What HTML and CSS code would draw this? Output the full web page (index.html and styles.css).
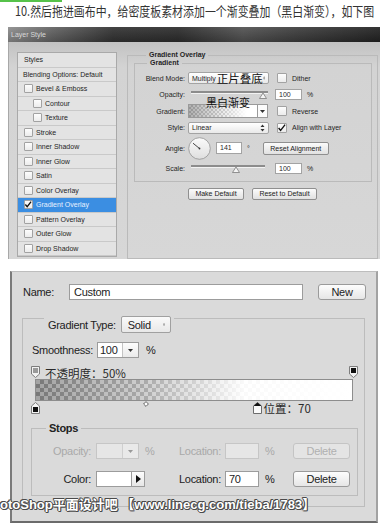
FILE: index.html
```html
<!DOCTYPE html>
<html lang="zh-CN">
<head>
    <meta charset="UTF-8">
    <meta name="viewport" content="width=device-width, initial-scale=1.0">
    <title>渐变叠加</title>
    <link rel="stylesheet" href="styles.css">
</head>
<body>
    <div class="accent"></div>
    <p class="caption"><span>10.然后拖进画布中，给密度板素材添加一个渐变叠加（黑白渐变），如下图</span></p>

    <!-- Layer Style dialog -->
    <section class="layer-style">
        <div class="ls-title">Layer Style</div>
        <div class="ls-body">
            <ul class="ls-list">
                <li class="ls-plain">Styles</li>
                <li class="ls-plain ls-blend">Blending Options: Default</li>
                <li><i class="cb"></i>Bevel &amp; Emboss</li>
                <li class="ls-sub"><i class="cb"></i>Contour</li>
                <li class="ls-sub"><i class="cb"></i>Texture</li>
                <li><i class="cb"></i>Stroke</li>
                <li><i class="cb"></i>Inner Shadow</li>
                <li><i class="cb"></i>Inner Glow</li>
                <li><i class="cb"></i>Satin</li>
                <li><i class="cb"></i>Color Overlay</li>
                <li class="ls-on"><i class="cb"><svg width="9" height="9" viewBox="0 0 9 9"><path d="M1.5 4.5 L3.6 7 L8 1.2" fill="none" stroke="#111" stroke-width="1.5"/></svg></i>Gradient Overlay</li>
                <li><i class="cb"></i>Pattern Overlay</li>
                <li><i class="cb"></i>Outer Glow</li>
                <li><i class="cb"></i>Drop Shadow</li>
            </ul>
            <fieldset class="ls-group">
                <legend>Gradient Overlay</legend>
                <fieldset class="ls-inner">
                    <legend>Gradient</legend>
                    <div class="ls-rows">
                        <div class="ls-row">
                            <span class="ls-lbl">Blend Mode:</span>
                            <div class="ls-select">
                                <span>Multiply</span><span class="ls-cn">正片叠底</span>
                                <svg width="5" height="8" viewBox="0 0 5 8"><path d="M2.5 0.5 L4.5 3 H0.5 Z M2.5 7.5 L4.5 5 H0.5 Z" fill="#333"/></svg>
                            </div>
                            <label class="ls-check"><i class="cb"></i>Dither</label>
                        </div>
                        <div class="ls-row">
                            <span class="ls-lbl">Opacity:</span>
                            <svg class="ls-slider" width="81" height="14" viewBox="0 0 81 14">
                                <line x1="3" y1="4" x2="80" y2="4" stroke="#8c8c8c" stroke-width="2"/>
                                <line x1="3" y1="5.5" x2="80" y2="5.5" stroke="#f2f2f2" stroke-width="1"/>
                                <path d="M75 5 L78.5 10.5 H71.5 Z" fill="#f4f4f4" stroke="#7a7a7a" stroke-width="0.8"/>
                            </svg>
                            <span class="ls-num">100</span><span class="ls-unit">%</span>
                        </div>
                        <div class="ls-row">
                            <span class="ls-lbl">Gradient:</span>
                            <div class="ls-grad"><span class="ls-note">黑白渐变</span></div>
                            <span class="ls-drop"><svg width="5" height="3" viewBox="0 0 5 3"><path d="M0 0 H5 L2.5 3 Z" fill="#333"/></svg></span>
                            <label class="ls-check ls-check-wide"><i class="cb"></i>Reverse</label>
                        </div>
                        <div class="ls-row">
                            <span class="ls-lbl">Style:</span>
                            <div class="ls-select">
                                <span>Linear</span>
                                <svg width="5" height="8" viewBox="0 0 5 8"><path d="M2.5 0.5 L4.5 3 H0.5 Z M2.5 7.5 L4.5 5 H0.5 Z" fill="#333"/></svg>
                            </div>
                            <label class="ls-check"><i class="cb"><svg width="10" height="10" viewBox="0 0 10 10"><path d="M1.8 5 L4 7.8 L9 1.2" fill="none" stroke="#111" stroke-width="1.5"/></svg></i>Align with Layer</label>
                        </div>
                        <div class="ls-row ls-row-tall">
                            <span class="ls-lbl">Angle:</span>
                            <svg class="ls-dial" width="23" height="23" viewBox="0 0 23 23">
                                <defs><linearGradient id="dialFill" x1="0" y1="0" x2="0" y2="1"><stop offset="0" stop-color="#fbfbfb"/><stop offset="1" stop-color="#dedede"/></linearGradient></defs>
                                <circle cx="11.5" cy="11.5" r="10.8" fill="url(#dialFill)" stroke="#9a9a9a" stroke-width="0.9"/>
                                <line x1="11.5" y1="11.5" x2="5" y2="6.2" stroke="#333" stroke-width="0.9"/>
                                <circle cx="11.5" cy="11.5" r="0.9" fill="#333"/>
                            </svg>
                            <span class="ls-num ls-num-angle">141</span><span class="ls-unit">°</span>
                            <span class="ls-btn ls-btn-align">Reset Alignment</span>
                        </div>
                        <div class="ls-row">
                            <span class="ls-lbl">Scale:</span>
                            <svg class="ls-slider" width="81" height="14" viewBox="0 0 81 14">
                                <line x1="3" y1="4" x2="77" y2="4" stroke="#8c8c8c" stroke-width="2"/>
                                <line x1="3" y1="5.5" x2="77" y2="5.5" stroke="#f2f2f2" stroke-width="1"/>
                                <path d="M48 5 L51.5 10.5 H44.5 Z" fill="#f4f4f4" stroke="#7a7a7a" stroke-width="0.8"/>
                            </svg>
                            <span class="ls-num">100</span><span class="ls-unit">%</span>
                        </div>
                    </div>
                </fieldset>
                <div class="ls-actions">
                    <span class="ls-btn ls-btn-default">Make Default</span>
                    <span class="ls-btn ls-btn-reset">Reset to Default</span>
                </div>
            </fieldset>
        </div>
    </section>

    <!-- Gradient Editor -->
    <section class="gradient-editor">
        <div class="ge-name">
            <span class="ge-name-label">Name:</span>
            <span class="ge-field">Custom</span>
            <span class="ge-btn ge-btn-new">New</span>
        </div>

        <div class="ge-type">
            <div class="ge-type-head">
                <span>Gradient Type:</span>
                <span class="ge-select">Solid
                    <svg width="6" height="9" viewBox="0 0 6 9"><path d="M3 0.5 L5.5 3.5 H0.5 Z M3 8.5 L5.5 5.5 H0.5 Z" fill="#444"/></svg>
                </span>
            </div>

            <div class="ge-smooth">
                <span class="ge-smooth-label">Smoothness:</span>
                <span class="ge-combo">
                    <span class="ge-combo-val">100</span>
                    <span class="ge-combo-btn"><svg width="5" height="3" viewBox="0 0 5 3"><path d="M0 0 H5 L2.5 3 Z" fill="#333"/></svg></span>
                </span>
                <span class="ge-unit">%</span>
            </div>

            <div class="ge-ramp">
                <div class="ge-stops ge-stops-top">
                    <svg class="ge-stop" style="left: calc(0% - 4.5px)" width="9" height="12" viewBox="0 0 9 12"><path d="M0.5 0.5 H8.5 V8 L4.5 11.5 L0.5 8 Z" fill="#f2f2f2" stroke="#7d7d7d"/><rect x="2" y="2" width="5" height="5" fill="#9a9a9a"/></svg>
                    <span class="ge-note ge-note-opacity">不透明度：50%</span>
                    <svg class="ge-stop" style="left: calc(100% - 4.5px)" width="9" height="12" viewBox="0 0 9 12"><path d="M0.5 0.5 H8.5 V8 L4.5 11.5 L0.5 8 Z" fill="#f2f2f2" stroke="#7d7d7d"/><rect x="2" y="2" width="5" height="5" fill="#111"/></svg>
                </div>
                <div class="ge-bar"></div>
                <div class="ge-stops ge-stops-bottom">
                    <svg class="ge-stop" style="left: calc(0% - 4.5px)" width="9" height="12" viewBox="0 0 9 12"><path d="M4.5 0.5 L8.5 4 V11.5 H0.5 V4 Z" fill="#f2f2f2" stroke="#7d7d7d"/><rect x="2" y="5" width="5" height="5" fill="#111"/></svg>
                    <svg class="ge-mid" style="left: calc(35% - 3px)" width="6" height="6" viewBox="0 0 6 6"><path d="M3 0.6 L5.4 3 L3 5.4 L0.6 3 Z" fill="#fff" stroke="#555" stroke-width="0.9"/></svg>
                    <svg class="ge-stop" style="left: calc(70% - 4.5px)" width="9" height="12" viewBox="0 0 9 12"><path d="M4.5 0.5 L8.5 4 V11.5 H0.5 V4 Z" fill="#fafafa" stroke="#6d6d6d"/><path d="M4.5 0.5 L8.5 4 H0.5 Z" fill="#111"/></svg>
                    <span class="ge-note ge-note-location" style="left: calc(70% + 6px)">位置：70</span>
                </div>
            </div>

            <fieldset class="ge-stops-box">
                <legend>Stops</legend>
                <div class="ge-row ge-row-off">
                    <span class="ge-row-label">Opacity:</span>
                    <span class="ge-cell">
                        <span class="ge-combo ge-combo-small">
                            <span class="ge-combo-val"></span>
                            <span class="ge-combo-btn"><svg width="5" height="3" viewBox="0 0 5 3"><path d="M0 0 H5 L2.5 3 Z" fill="#999"/></svg></span>
                        </span>
                        <span class="ge-unit">%</span>
                    </span>
                    <span class="ge-cell ge-cell-loc">
                        <span class="ge-loc-label">Location:</span>
                        <span class="ge-loc"></span>
                        <span class="ge-unit">%</span>
                    </span>
                    <span class="ge-btn ge-btn-delete">Delete</span>
                </div>
                <div class="ge-row">
                    <span class="ge-row-label">Color:</span>
                    <span class="ge-cell">
                        <span class="ge-swatch"></span>
                        <span class="ge-swatch-btn"><svg width="5" height="8" viewBox="0 0 5 8"><path d="M0 0 L5 4 L0 8 Z" fill="#111"/></svg></span>
                    </span>
                    <span class="ge-cell ge-cell-loc">
                        <span class="ge-loc-label">Location:</span>
                        <span class="ge-loc">70</span>
                        <span class="ge-unit">%</span>
                    </span>
                    <span class="ge-btn ge-btn-delete">Delete</span>
                </div>
            </fieldset>
        </div>

        <div class="watermark">otoShop平面设计吧 【www.linecg.com/tieba/1783】</div>
    </section>
</body>
</html>
```

FILE: styles.css
```css
* {
    box-sizing: border-box;
}
body {
    margin: 0;
    width: 388px;
    height: 525px;
    overflow: hidden;
    background-color: #fff;
    font-family: 'Liberation Sans', Arial, sans-serif;
}
.accent {
    width: 62px;
    height: 2px;
    background-color: #56c24a;
}
.caption {
    margin: 0;
    padding-left: 15px;
    height: 17px;
    overflow: hidden;
    line-height: 17px;
    font-family: 'Noto Sans CJK SC', sans-serif;
    font-size: 13px;
    color: #333;
    white-space: nowrap;
}
.caption span {
    display: inline-block;
    transform: scaleX(0.84);
    transform-origin: left center;
}

/* ---------- Layer Style ---------- */
.layer-style {
    margin: 8px 0 0 8px;
    width: 372px;
    font-size: 7px;
    color: #1f1f1f;
}
.ls-title {
    height: 15px;
    line-height: 15px;
    padding-left: 3px;
    color: #d8d8d8;
    background:
        linear-gradient(180deg, rgba(255, 255, 255, 0.08), rgba(0, 0, 0, 0.18)),
        linear-gradient(90deg, #8e8e8e 0, #626262 45px, #333 105px, #2d2d2d 170px, #525252 235px, #3d3d3d 290px, #232323 100%);
}
.ls-body {
    display: flex;
    gap: 10px;
    height: 217px;
    padding: 10px 2px 0 8px;
    border-left: 1px solid #a8a8a8;
    background: linear-gradient(180deg, #c2c2c2 0, #d3d3d3 25px, #d7d7d7 100%);
}
.ls-list {
    list-style: none;
    margin: 0;
    padding: 0;
    flex: none;
    width: 100px;
    height: 205px;
    border: 1px solid #a9a9a9;
    background-color: #e3e3e3;
}
.ls-list li {
    display: flex;
    align-items: center;
    gap: 3px;
    height: 14.5px;
    padding-left: 6px;
    border-bottom: 1px solid #c9c9c9;
    white-space: nowrap;
}
.ls-list li.ls-blend {
    padding-left: 5px;
}
.ls-list li.ls-sub {
    padding-left: 15px;
}
.ls-list li.ls-on {
    background-color: #3b8ee2;
    color: #e8f1ff;
}
.cb {
    display: inline-flex;
    flex: none;
    width: 9px;
    height: 9px;
    border: 1px solid #a2a2a2;
    border-radius: 1px;
    background: linear-gradient(180deg, #fdfdfd, #ececec);
}
.cb svg {
    margin: -1px 0 0 -1px;
}
.ls-group {
    flex: 1;
    min-width: 0;
    height: 208px;
    margin: -1px 0 0;
    padding: 0 5px 0 6px;
    border: 1px solid #bababa;
}
.ls-group > legend,
.ls-inner > legend {
    margin-left: 12px;
    padding: 0 3px;
    line-height: 8px;
    font-weight: bold;
}
.ls-inner {
    min-width: 0;
    margin: 0;
    padding: 4px 0 5px;
    border: 1px solid #bababa;
}
.ls-rows {
    display: flex;
    flex-direction: column;
    gap: 2.5px;
}
.ls-row {
    display: flex;
    align-items: center;
    height: 14px;
    white-space: nowrap;
}
.ls-row-tall {
    height: 22px;
}
.ls-lbl {
    flex: none;
    width: 50px;
    margin-right: 3px;
    text-align: right;
}
.ls-select {
    display: flex;
    align-items: center;
    flex: none;
    width: 81px;
    height: 12px;
    padding: 0 3px;
    border: 1px solid #a3a3a3;
    border-radius: 2px;
    background: linear-gradient(180deg, #fff, #e9e9e9);
}
.ls-select svg {
    margin-left: auto;
}
.ls-cn {
    margin-left: 1px;
    font-family: 'Noto Sans CJK SC', sans-serif;
    font-size: 11.5px;
    line-height: 12px;
    color: #111;
}
.ls-check {
    display: flex;
    align-items: center;
    gap: 5px;
    margin-left: 8px;
}
.ls-check-wide {
    margin-left: 9px;
}
.ls-check .cb {
    width: 10px;
    height: 10px;
}
.ls-slider {
    flex: none;
}
.ls-num {
    flex: none;
    width: 27px;
    height: 11px;
    margin-left: 6px;
    padding-left: 3px;
    line-height: 9px;
    border: 1px solid #a3a3a3;
    background-color: #fff;
}
.ls-num-angle {
    width: 26px;
    height: 12px;
    line-height: 10px;
    margin-left: 5px;
}
.ls-unit {
    margin-left: 5px;
}
.ls-grad {
    position: relative;
    flex: none;
    width: 70px;
    height: 14px;
    border: 1px solid #9a9a9a;
    background:
        linear-gradient(90deg, rgba(110, 110, 110, 0.55) 0, rgba(210, 210, 210, 0.45) 50%, #fff 85%),
        repeating-conic-gradient(#c4c4c4 0 25%, #fff 0 50%) 0 0 / 4px 4px;
}
.ls-note {
    position: absolute;
    left: 17px;
    top: -9px;
    font-family: 'Noto Sans CJK SC', sans-serif;
    font-size: 11px;
    line-height: 12px;
    color: #111;
}
.ls-drop {
    display: flex;
    align-items: center;
    justify-content: center;
    flex: none;
    width: 10px;
    height: 14px;
    border: 1px solid #9a9a9a;
    border-left: none;
    background-color: #fbfbfb;
}
.ls-dial {
    flex: none;
}
.ls-btn {
    display: inline-flex;
    align-items: center;
    justify-content: center;
    flex: none;
    height: 13px;
    border: 1px solid #8f8f8f;
    border-radius: 2px;
    background: linear-gradient(180deg, #fbfbfb, #e1e1e1);
    color: #222;
}
.ls-btn-align {
    width: 66px;
    margin-left: 13px;
}
.ls-actions {
    display: flex;
    gap: 8px;
    margin-top: 6px;
    padding-left: 54px;
}
.ls-actions .ls-btn {
    height: 12px;
}
.ls-btn-default {
    width: 56px;
}
.ls-btn-reset {
    width: 65px;
}

/* ---------- Gradient Editor ---------- */
.gradient-editor {
    position: relative;
    margin: 12px 0 0 10px;
    width: 368px;
    height: 252px;
    padding: 12px 0 0 11px;
    border-top: 1px solid #bdbdbd;
    border-left: 2px solid #7a7a7a;
    border-right: 2px solid #a2a2a2;
    border-bottom: 2px solid #6b6b6b;
    background-color: #dadada;
    font-size: 11px;
    letter-spacing: -0.3px;
    color: #222;
}
.ge-name {
    display: flex;
    align-items: center;
    height: 16px;
}
.ge-name-label {
    width: 46px;
}
.ge-field {
    width: 234px;
    height: 16px;
    padding-left: 4px;
    line-height: 14px;
    border: 1px solid #9c9c9c;
    background-color: #fff;
}
.ge-btn {
    display: inline-flex;
    align-items: center;
    justify-content: center;
    flex: none;
    height: 16px;
    border: 1px solid #9a9a9a;
    border-radius: 3px;
    background: linear-gradient(180deg, #fdfdfd, #e6e6e6);
    color: #222;
}
.ge-btn-new {
    width: 48px;
    margin-left: 15px;
}
.ge-type {
    width: 343px;
    margin: 18px 0 0 -1px;
    padding: 0 0 10px 8px;
    border: 1px solid #bcbcbc;
}
.ge-type-head {
    display: flex;
    align-items: center;
    gap: 5px;
    width: max-content;
    height: 17px;
    margin: -3px 0 0 13px;
    padding: 0 3px 0 4px;
    background-color: #dadada;
}
.ge-select {
    display: inline-flex;
    align-items: center;
    gap: 12px;
    width: 50px;
    height: 17px;
    padding: 0 5px 0 6px;
    border: 1px solid #a0a0a0;
    border-radius: 2px;
    background: linear-gradient(180deg, #fafafa, #e8e8e8);
}
.ge-smooth {
    display: flex;
    align-items: center;
    height: 16px;
    margin-top: 9px;
}
.ge-smooth-label {
    width: 66px;
    padding-left: 1px;
}
.ge-combo {
    display: inline-flex;
    height: 16px;
    border: 1px solid #9c9c9c;
    background-color: #fff;
}
.ge-combo-val {
    width: 24px;
    padding-left: 2px;
    line-height: 14px;
}
.ge-combo-btn {
    display: flex;
    align-items: center;
    justify-content: center;
    width: 16px;
    border-left: 1px solid #c4c4c4;
    background: linear-gradient(180deg, #fdfdfd, #eaeaea);
}
.ge-unit {
    margin-left: 7px;
}
.ge-ramp {
    width: 318px;
    margin: 8px 0 0 4px;
}
.ge-stops {
    position: relative;
    height: 13px;
}
.ge-stop {
    position: absolute;
    top: 0;
}
.ge-stops-bottom .ge-stop {
    top: 1px;
}
.ge-mid {
    position: absolute;
    top: 0;
}
.ge-note {
    font-family: 'Noto Sans CJK SC', sans-serif;
    font-size: 11.5px;
    line-height: 13px;
    letter-spacing: 0;
    color: #2a2a2a;
}
.ge-note-opacity {
    position: absolute;
    left: 10px;
    top: 1px;
}
.ge-note-location {
    position: absolute;
    top: 1px;
}
.ge-bar {
    height: 22px;
    border: 1px solid #8d8d8d;
    background:
        linear-gradient(90deg, rgba(0, 0, 0, 0.36) 0, rgba(150, 150, 150, 0.45) 35%, rgba(255, 255, 255, 0.92) 66%, #fff 100%),
        repeating-conic-gradient(#bcbcbc 0 25%, #fff 0 50%) 0 0 / 8px 8px;
}
.ge-stops-box {
    width: 327px;
    min-width: 0;
    margin: 8px 0 0;
    padding: 8px 0 8px;
    border: 1px solid #bcbcbc;
}
.ge-stops-box > legend {
    margin-left: 14px;
    padding: 0 3px;
    line-height: 13px;
    font-weight: bold;
}
.ge-row {
    display: flex;
    align-items: center;
    height: 16px;
    white-space: nowrap;
}
.ge-row + .ge-row {
    margin-top: 12px;
}
.ge-row-label {
    width: 59px;
    margin-right: 5px;
    text-align: right;
}
.ge-cell {
    display: flex;
    align-items: center;
    width: 83px;
    height: 16px;
}
.ge-combo-small .ge-combo-val {
    width: 25px;
}
.ge-cell .ge-unit {
    margin-left: 6px;
}
.ge-cell-loc {
    width: 114px;
}
.ge-loc-label {
    width: 41px;
}
.ge-loc {
    width: 34px;
    height: 16px;
    margin-left: 5px;
    padding-left: 3px;
    line-height: 14px;
    border: 1px solid #9c9c9c;
    background-color: #fff;
}
.ge-swatch {
    width: 36px;
    height: 16px;
    border: 1px solid #9c9c9c;
    background-color: #fff;
}
.ge-swatch-btn {
    display: flex;
    align-items: center;
    justify-content: center;
    width: 13px;
    height: 16px;
    border: 1px solid #9c9c9c;
    border-left: none;
    background: linear-gradient(180deg, #fdfdfd, #e6e6e6);
}
.ge-btn-delete {
    width: 57px;
}
.ge-row-off {
    color: #a9a9a9;
}
.ge-row-off .ge-combo,
.ge-row-off .ge-loc {
    border-color: #c6c6c6;
    background-color: #e6e6e6;
}
.ge-row-off .ge-combo-btn {
    border-left-color: #cfcfcf;
    background: #e9e9e9;
}
.ge-row-off .ge-btn {
    border-color: #c4c4c4;
    background: #e4e4e4;
    color: #b0b0b0;
}
.watermark {
    position: absolute;
    left: -12px;
    top: 225px;
    font-family: 'Liberation Sans', 'Noto Sans CJK SC', sans-serif;
    font-size: 13px;
    font-weight: bold;
    line-height: 15px;
    letter-spacing: 0;
    color: #fff;
    white-space: nowrap;
    text-shadow: 1px 0 #4a4a4a, -1px 0 #4a4a4a, 0 1px #4a4a4a, 0 -1px #4a4a4a, 1px 1px #4a4a4a, -1px -1px #4a4a4a;
}
```
